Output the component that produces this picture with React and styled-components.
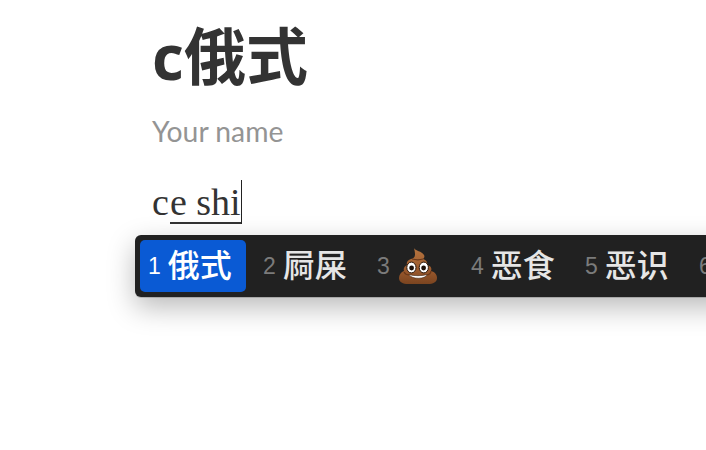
import React from 'react';
import styled, { createGlobalStyle } from 'styled-components';

const Global = createGlobalStyle`
  html, body {
    margin: 0;
    padding: 0;
    background: #fff;
    overflow: hidden;
  }
`;

const Page = styled.div`
  width: 706px;
  height: 450px;
  overflow: hidden;
  padding: 18px 0 0 152px;
  box-sizing: border-box;
`;

const Title = styled.h1`
  margin: 0;
  font-family: 'Open Sans', 'Noto Sans CJK SC', sans-serif;
  font-size: 62px;
  line-height: 76px;
  font-weight: 700;
  color: #333;
`;

const Subtitle = styled.div`
  margin-top: 19px;
  font-family: 'Lato', 'Noto Sans', sans-serif;
  font-size: 28.3px;
  line-height: 36px;
  color: #949494;
`;

const Composition = styled.div`
  margin-top: 31px;
  height: 48px;
  display: flex;
  align-items: flex-start;
  font-family: 'Liberation Serif', serif;
  font-size: 38px;
  line-height: 44px;
  color: #333;
`;

const Marked = styled.span`
  display: block;
  height: 42px;
  margin-left: 1px;
  border-bottom: 2px solid #333;
  white-space: pre;
`;

const Caret = styled.span`
  display: block;
  width: 1.5px;
  height: 44px;
  background: #222;
`;

const Candidates = styled.div`
  margin: 7px 0 0 -17px;
  width: 640px;
  height: 62px;
  box-sizing: border-box;
  padding: 5px;
  display: flex;
  background: #212121;
  border-radius: 6px 0 0 6px;
  box-shadow: 0 10px 28px rgba(0, 0, 0, 0.28), 0 1px 0 #d4d4d4;
`;

const Candidate = styled.div`
  width: ${p => p.$width}px;
  margin-right: ${p => (p.$active ? 9 : 0)}px;
  flex: none;
  box-sizing: border-box;
  padding-left: 8px;
  display: flex;
  align-items: center;
  gap: 7px;
  border-radius: 5px;
  background: ${p => (p.$active ? '#0a5ad4' : 'transparent')};
`;

const Index = styled.span`
  font-family: 'Liberation Sans', sans-serif;
  font-size: 23px;
  color: ${p => (p.$active ? '#fff' : '#7b7b7b')};
`;

const Word = styled.span`
  font-family: 'Noto Sans CJK SC', sans-serif;
  font-size: 32px;
  line-height: 40px;
  font-weight: 500;
  color: ${p => (p.$active ? '#fff' : '#e6e6e6')};
  transform: translateY(-3px);
`;

const PoopIcon = () => (
  <svg width="38" height="36" viewBox="0 0 38 36" style={{ marginLeft: 2, flex: 'none' }}>
    <defs>
      <linearGradient id="poop" x1="0" y1="0" x2="0" y2="1">
        <stop offset="0" stopColor="#b5743f" />
        <stop offset="0.6" stopColor="#9c5a2d" />
        <stop offset="1" stopColor="#7a4420" />
      </linearGradient>
    </defs>
    <path
      d="M15 0c1 3 8 3 10 7 1 2 0 3-1 4 3 1 5 3 4 6 4 1 5 3 4 6 4 1 6 4 6 7 0 4-4 6-9 6H9c-5 0-9-2-9-6 0-3 2-6 5-7-1-3 1-5 3-6-1-3 1-5 4-6 4-1 5-3 3-11z"
      fill="url(#poop)"
    />
    <path d="M13 11c4 1 8 1 11 0M8 17c2 2 4 2 6 2M24 19c2 0 4-1 4-2M5 24c1 2 3 3 5 3M28 27c2 0 4-2 4-4" stroke="#69381a" strokeWidth="1.2" fill="none" />
    <ellipse cx="12.4" cy="19.5" rx="4.6" ry="5.4" fill="#fff" stroke="#2a1608" strokeWidth="1" />
    <ellipse cx="24.8" cy="19.5" rx="4.6" ry="5.4" fill="#fff" stroke="#2a1608" strokeWidth="1" />
    <circle cx="12.6" cy="20" r="2.4" fill="#1d1008" />
    <circle cx="24.6" cy="20" r="2.4" fill="#1d1008" />
    <path d="M10 26.5c5 1.6 13 1.6 18 0-1 5-16 5-18 0z" fill="#fff" stroke="#3a1e0c" strokeWidth="0.6" />
  </svg>
);

const items = [
  { n: 1, word: '俄式', width: 106, active: true },
  { n: 2, word: '屙屎', width: 114 },
  { n: 3, poop: true, width: 94 },
  { n: 4, word: '恶食', width: 114 },
  { n: 5, word: '恶识', width: 114 },
  { n: 6, word: '', width: 60 },
];

export default function App() {
  return (
    <Page>
      <Global />
      <Title>c俄式</Title>
      <Subtitle>Your name</Subtitle>
      <Composition>
        c<Marked>e shi</Marked>
        <Caret />
      </Composition>
      <Candidates>
        {items.map(item => (
          <Candidate key={item.n} $width={item.width} $active={item.active}>
            <Index $active={item.active}>{item.n}</Index>
            {item.poop ? <PoopIcon /> : <Word $active={item.active}>{item.word}</Word>}
          </Candidate>
        ))}
      </Candidates>
    </Page>
  );
}
